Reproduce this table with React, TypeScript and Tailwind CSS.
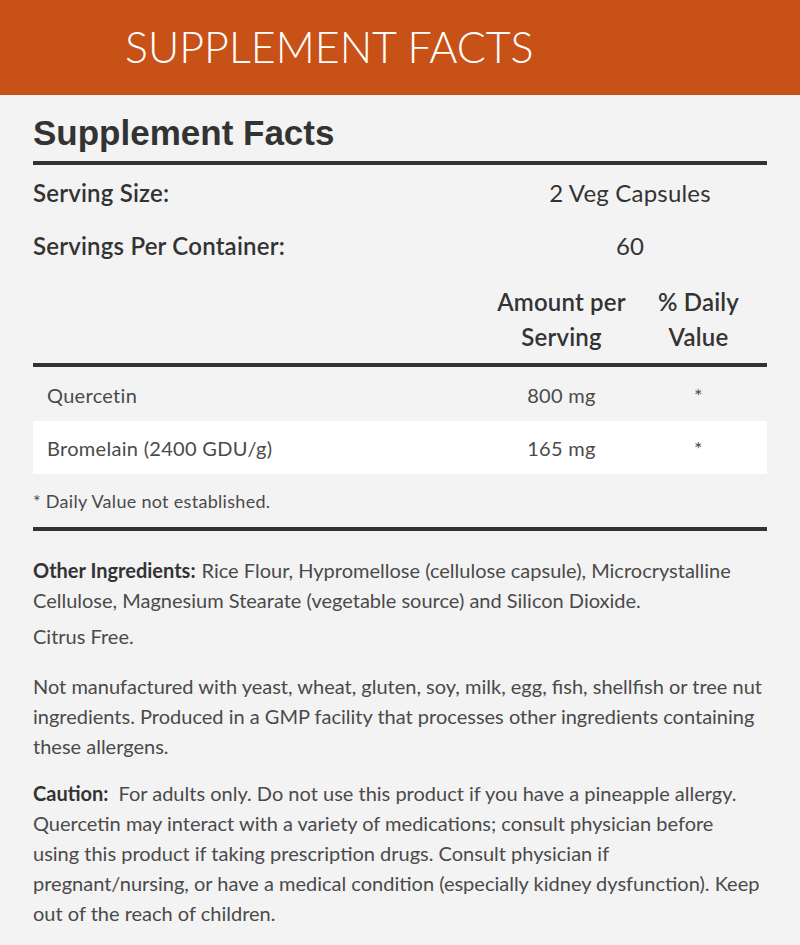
import React from 'react';

const nutrients = [
  { name: 'Quercetin', amount: '800 mg', dv: '*' },
  { name: 'Bromelain (2400 GDU/g)', amount: '165 mg', dv: '*' },
];

export default function App() {
  return (
    <div className="min-h-[945px] bg-[#f3f3f3] text-[#4a4a4a] font-['Lato',sans-serif]">
      <div className="h-[95px] bg-[#c85118] flex items-center pl-[125px] pb-[3px]">
        <h1 className="text-[43px] font-light text-white leading-none">SUPPLEMENT FACTS</h1>
      </div>

      <div className="px-[33px]">
        <h2 className="pt-[18px] text-[35px] font-bold text-[#333] leading-[40px] font-['Liberation_Sans',sans-serif]">
          Supplement Facts
        </h2>
        <div className="mt-[8px] h-[4px] bg-[#333]" />

        <div className="text-[#333] text-[24px] tracking-[0.2px]">
          <div className="flex items-center h-[56px]">
            <div className="flex-1 font-semibold">Serving Size:</div>
            <div className="w-[274px] text-center">2 Veg Capsules</div>
          </div>
          <div className="flex items-center h-[50px]">
            <div className="flex-1 font-semibold">Servings Per Container:</div>
            <div className="w-[274px] text-center">60</div>
          </div>
          <div className="flex h-[92px] pt-[13px] font-semibold leading-[35px]">
            <div className="flex-1" />
            <div className="w-[137px] text-center">Amount per<br />Serving</div>
            <div className="w-[137px] text-center">% Daily<br />Value</div>
          </div>
        </div>
        <div className="h-[4px] bg-[#333]" />

        {nutrients.map((n, i) => (
          <div
            key={n.name}
            className={`flex items-center text-[20px] tracking-[0.3px] ${i % 2 === 1 ? 'bg-white h-[53px]' : 'h-[54px] pt-[1px]'}`}
          >
            <div className="flex-1 pl-[14px]">{n.name}</div>
            <div className="w-[137px] text-center">{n.amount}</div>
            <div className="w-[137px] text-center">{n.dv}</div>
          </div>
        ))}

        <p className="mt-[15px] text-[18px] tracking-[0.3px] leading-[24px]">* Daily Value not established.</p>
        <div className="mt-[14px] h-[4px] bg-[#333]" />

        <div className="mt-[24px] text-[20px] leading-[30px]">
          <p>
            <span className="font-bold text-[#333] mr-[6px]">Other Ingredients:</span>Rice Flour, Hypromellose (cellulose capsule), Microcrystalline Cellulose, Magnesium Stearate (vegetable source) and Silicon Dioxide.
          </p>
          <p className="mt-[6px]">Citrus Free.</p>
          <p className="mt-[20px]">
            Not manufactured with yeast, wheat, gluten, soy, milk, egg, fish, shellfish or tree nut ingredients. Produced in a GMP facility that processes other ingredients containing these allergens.
          </p>
          <p className="mt-[17px]">
            <span className="font-bold text-[#333] mr-[10px]">Caution:</span>For adults only. Do not use this product if you have a pineapple allergy.
            <br />
            Quercetin may interact with a variety of medications; consult physician before
            <br />
            using this product if taking prescription drugs. Consult physician if
            <br />
            pregnant/nursing, or have a medical condition (especially kidney dysfunction). Keep
            <br />
            out of the reach of children.
          </p>
        </div>
      </div>
    </div>
  );
}
